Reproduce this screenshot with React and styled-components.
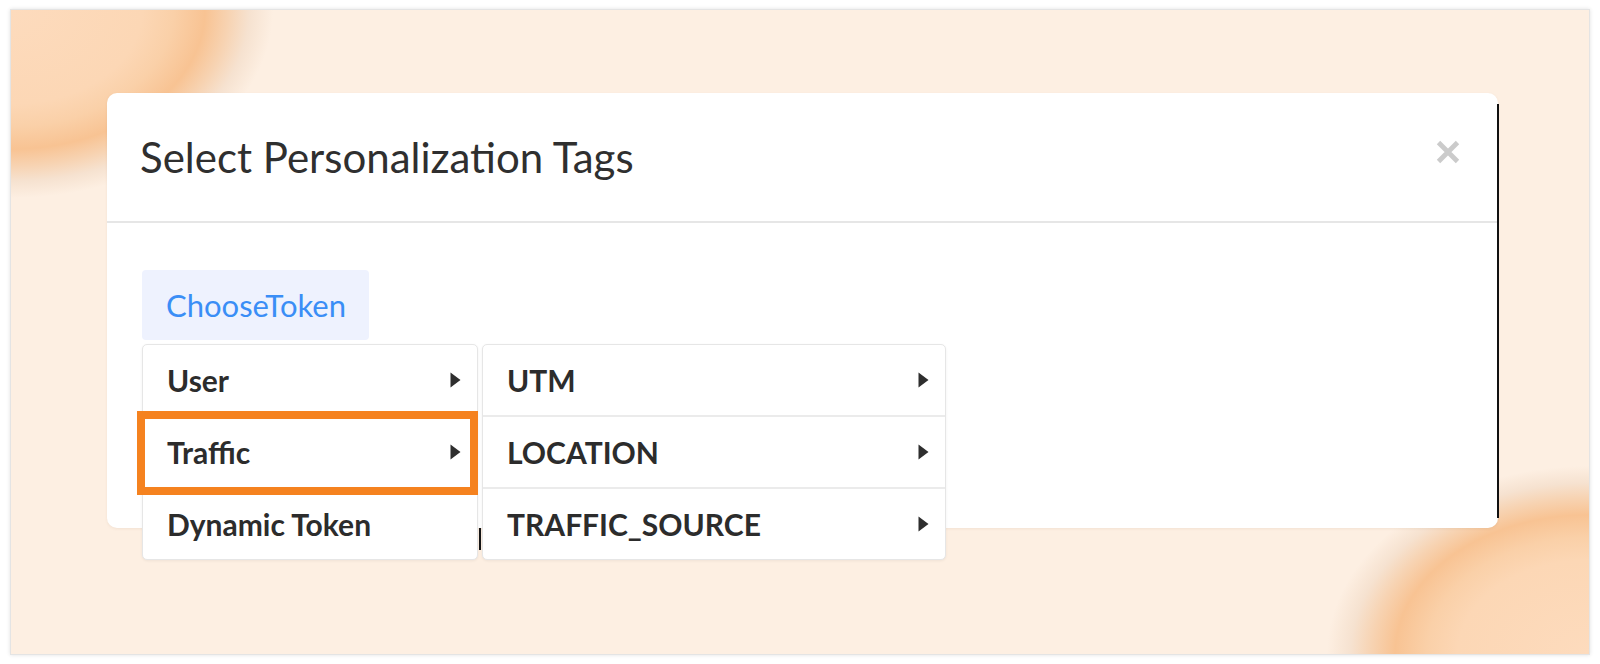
import React from "react";
import styled, { createGlobalStyle } from "styled-components";

const Global = createGlobalStyle`
  html, body { margin: 0; padding: 0; background: #ffffff; }
  body { font-family: Lato, "Noto Sans", sans-serif; }
  * { box-sizing: border-box; }
`;

const Page = styled.div`
  width: 1600px;
  height: 664px;
  padding: 9px 10px 9px 10px;
  background: #ffffff;
`;

const ring = (pos) => `radial-gradient(ellipse 262px 188px at ${pos}, #fddbbd 0%, #fcd7b5 50%, #fad0a8 62%, #f8c393 74%, #f7d3b2 83%, #f6e2d0 91%, rgba(253, 239, 226, 0) 100%)`;

const Frame = styled.div`
  width: 1580px;
  height: 646px;
  border: 1px solid #e4e4e4;
  box-shadow: 0 0 4px rgba(0, 0, 0, 0.12);
  padding: 83px 0 0 96px;
  background: ${ring("0 0")}, ${ring("100% 100%")}, #fdefe2;
`;

const Modal = styled.div`
  position: relative;
  width: 1391px;
  height: 435px;
  background: #ffffff;
  border-radius: 10px;
  box-shadow: 0 1px 3px rgba(120, 80, 40, 0.08);
  &::after {
    content: "";
    position: absolute;
    right: -1px;
    top: 11px;
    bottom: 10px;
    width: 2px;
    background: #111111;
  }
`;

const Header = styled.div`
  height: 130px;
  display: flex;
  align-items: center;
  justify-content: space-between;
  padding: 0 38px 0 33px;
  border-bottom: 2px solid #e6e6e6;
`;

const Title = styled.h2`
  margin: 0;
  font-family: Lato, "Noto Sans", sans-serif;
  font-weight: 400;
  font-size: 42px;
  color: #2f2f2f;
  letter-spacing: 0;
`;

const Close = styled.button`
  border: 0;
  padding: 0;
  background: transparent;
  width: 24px;
  height: 24px;
  margin-top: -11px;
  display: flex;
  cursor: pointer;
`;

const Body = styled.div`
  padding: 47px 0 0 35px;
`;

const Tab = styled.div`
  display: flex;
  width: fit-content;
  align-items: center;
  height: 70px;
  padding: 0 23px 0 24px;
  background: #eef2fe;
  border-radius: 4px;
  font-family: Lato, "Noto Sans", sans-serif;
  font-size: 31px;
  font-weight: 400;
  color: #3a8ef6;
`;

const Menus = styled.div`
  position: relative;
  display: flex;
  gap: 4px;
  margin-top: 4px;
  align-items: flex-start;
  &::after {
    content: "";
    position: absolute;
    left: 337px;
    top: 184px;
    width: 2px;
    height: 22px;
    background: #151515;
  }
`;

const Column = styled.div`
  width: ${(p) => p.$w}px;
  background: #ffffff;
  border: 1px solid #e6e6e6;
  border-radius: 5px;
  box-shadow: 0 1px 3px rgba(0, 0, 0, 0.06);
  display: flex;
  flex-direction: column;
`;

const Row = styled.div`
  position: relative;
  height: 72px;
  display: flex;
  align-items: center;
  justify-content: space-between;
  padding: 0 16px 0 24px;
  border-bottom: 2px solid #ebebeb;
  font-family: Lato, "Noto Sans", sans-serif;
  font-size: 30px;
  font-weight: 700;
  color: #2c2c2c;
  &:last-child {
    border-bottom: 0;
    height: 70px;
  }
`;

const Highlight = styled.div`
  position: absolute;
  left: -6px;
  top: -6px;
  right: -1px;
  bottom: -8px;
  border: 8px solid #f5821f;
  pointer-events: none;
`;

const Caret = () => (
  <svg width="11" height="16" viewBox="0 0 11 16">
    <path d="M0.5 0.5 L10.5 8 L0.5 15.5 Z" fill="#2e2e2e" />
  </svg>
);

const left = [
  { label: "User", sub: true },
  { label: "Traffic", sub: true, hl: true },
  { label: "Dynamic Token", sub: false },
];

const right = [
  { label: "UTM", sub: true },
  { label: "LOCATION", sub: true },
  { label: "TRAFFIC_SOURCE", sub: true },
];

export default function App() {
  return (
    <>
      <Global />
      <Page>
        <Frame>
          <Modal>
            <Header>
              <Title>Select Personalization Tags</Title>
              <Close aria-label="close">
                <svg width="24" height="24" viewBox="0 0 24 24">
                  <path d="M2.5 2.5 L21.5 21.5 M21.5 2.5 L2.5 21.5" stroke="#cbcbcb" strokeWidth="4.8" strokeLinecap="butt" />
                </svg>
              </Close>
            </Header>
            <Body>
              <Tab>ChooseToken</Tab>
              <Menus>
                <Column $w={336}>
                  {left.map((it) => (
                    <Row key={it.label}>
                      <span>{it.label}</span>
                      {it.sub && <Caret />}
                      {it.hl && <Highlight />}
                    </Row>
                  ))}
                </Column>
                <Column $w={464}>
                  {right.map((it) => (
                    <Row key={it.label}>
                      <span>{it.label}</span>
                      {it.sub && <Caret />}
                    </Row>
                  ))}
                </Column>
              </Menus>
            </Body>
          </Modal>
        </Frame>
      </Page>
    </>
  );
}
